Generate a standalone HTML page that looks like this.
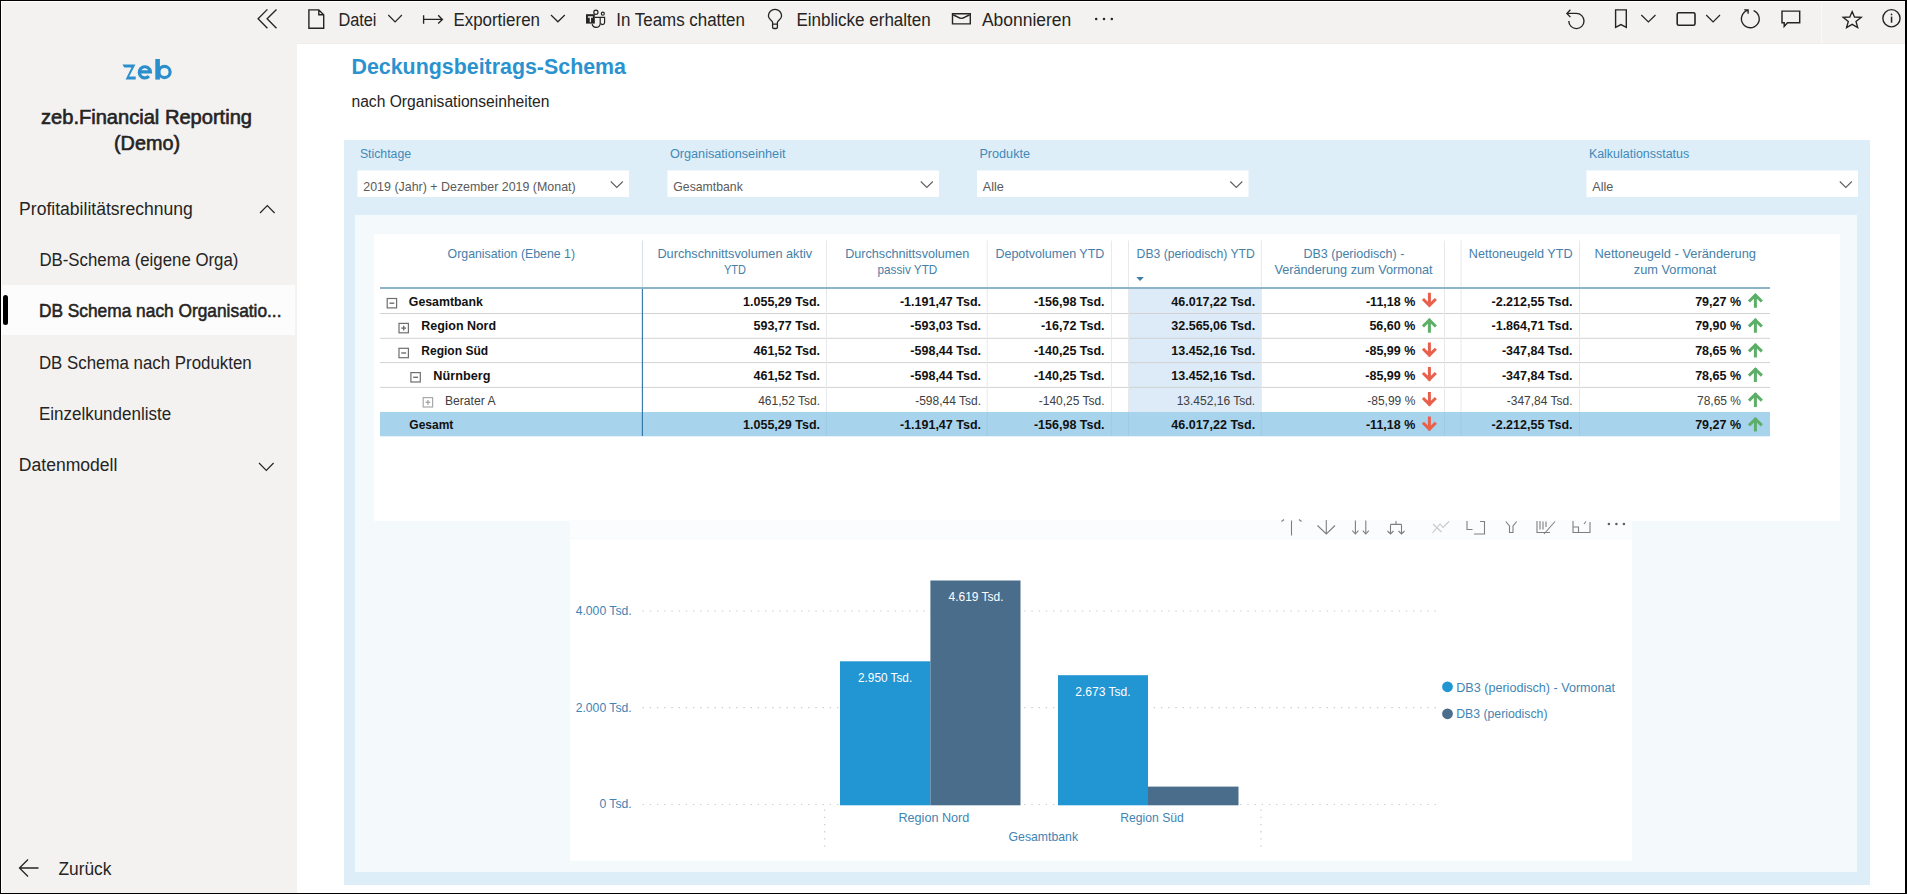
<!DOCTYPE html>
<html><head><meta charset="utf-8"><title>Deckungsbeitrags-Schema</title>
<style>html,body{margin:0;padding:0;background:#fff;overflow:hidden}svg{display:block}text{font-family:"Liberation Sans",sans-serif}</style>
</head><body>
<svg width="1907" height="894" viewBox="0 0 1907 894">
<rect x="0" y="0" width="1907" height="894" fill="#ffffff" />
<rect x="2" y="2" width="295" height="891" fill="#f3f2f1" />
<rect x="2" y="2" width="1903" height="42" fill="#f3f2f1" />
<line x1="297" y1="43.5" x2="1905" y2="43.5" stroke="#efeeec" stroke-width="1" />
<rect x="2" y="285" width="293" height="50" fill="#fcfcfc" />
<rect x="3" y="295" width="5" height="30" rx="2.5" fill="#000"/>
<path d="M267.4,9.4 L258.1,18.8 L267.4,28.3 M276.5,9.4 L267.1,18.8 L276.5,28.3" stroke="#252423" stroke-width="1.35" fill="none" />
<path d="M308.9,9.9 H318.8 L323.7,14.8 V28.2 H308.9 Z M318.8,9.9 V14.8 H323.7" stroke="#252423" stroke-width="1.4" fill="none" />
<text x="338.4" y="25.8" font-size="18" fill="#252423" textLength="38.1" lengthAdjust="spacingAndGlyphs" >Datei</text>
<path d="M388.3,15 L395.1,21.8 L401.9,15" stroke="#252423" stroke-width="1.2" fill="none" />
<path d="M423.6,15.2 V23.8 M424,19.4 H442.2 M438.2,15.2 L442.4,19.4 L438.2,23.6" stroke="#252423" stroke-width="1.35" fill="none" />
<text x="453.4" y="25.8" font-size="18" fill="#252423" textLength="86.6" lengthAdjust="spacingAndGlyphs" >Exportieren</text>
<path d="M551,15 L557.9,21.8 L564.8,15" stroke="#252423" stroke-width="1.2" fill="none" />
<g fill="none" stroke="#252423" stroke-width="1.2"><circle cx="595.9" cy="12.3" r="2.1"/><circle cx="602.8" cy="13.7" r="1.5"/><path d="M594.8,17.3 H600.2 V23.3 A4.1,4.1 0 0 1 592.1,24.2"/><path d="M600.4,17.3 H604.6 V22.4 A2.1,2.1 0 0 1 600.6,23.3"/></g>
<rect x="586" y="14.2" width="8.8" height="9.4" fill="#252423" />
<path d="M587.9,17 H592.9 M590.4,17 V22.2" stroke="#f3f2f1" stroke-width="1.3" fill="none" />
<text x="616.3" y="25.8" font-size="18" fill="#252423" textLength="128.5" lengthAdjust="spacingAndGlyphs" >In Teams chatten</text>
<path d="M772.6,24.1 V22.3 C772.6,20.6 768.4,19.2 768.4,15.9 A6.6,6.6 0 0 1 781.6,15.9 C781.6,19.2 777.4,20.6 777.4,22.3 V24.1 Z M772.6,24.1 V27.2 A1.3,1.3 0 0 0 773.9,28.5 H776.1 A1.3,1.3 0 0 0 777.4,27.2 V24.1" stroke="#252423" stroke-width="1.3" fill="none" />
<text x="796.4" y="25.8" font-size="18" fill="#252423" textLength="134.4" lengthAdjust="spacingAndGlyphs" >Einblicke erhalten</text>
<path d="M952.5,13.8 H970.3 V23.9 H952.5 Z" stroke="#252423" stroke-width="1.4" fill="none" />
<path d="M953.2,15 C957,16 958.5,18.4 961.4,18.4 C964.3,18.4 965.8,16 969.6,15" stroke="#252423" stroke-width="1.3" fill="none" />
<text x="981.9" y="25.8" font-size="18" fill="#252423" textLength="89.4" lengthAdjust="spacingAndGlyphs" >Abonnieren</text>
<circle cx="1096.2" cy="19" r="1.25" fill="#252423"/>
<circle cx="1104" cy="19" r="1.25" fill="#252423"/>
<circle cx="1111.8" cy="19" r="1.25" fill="#252423"/>
<path d="M1566.9,13.4 H1576.4 A7.6,7.6 0 1 1 1568.8,21 M1570.4,9.7 L1566.9,13.4 L1570.4,17.1" stroke="#252423" stroke-width="1.35" fill="none" />
<path d="M1615.6,9.9 H1626.3 V27.4 L1620.95,24.6 L1615.6,27.4 Z" stroke="#252423" stroke-width="1.4" fill="none" />
<path d="M1641.3,15 L1648.4,21.9 L1655.5,15" stroke="#252423" stroke-width="1.2" fill="none" />
<rect x="1677.2" y="12.7" width="17.8" height="12.6" rx="1.6" fill="none" stroke="#252423" stroke-width="1.6"/>
<path d="M1706.2,15 L1713.1,21.9 L1720,15" stroke="#252423" stroke-width="1.2" fill="none" />
<path d="M1753.6,10.6 A8.9,8.9 0 1 1 1747.6,10.4 M1744.2,9.8 H1748.1 V13.8" stroke="#252423" stroke-width="1.35" fill="none" />
<path d="M1782,11.1 H1799.7 V22.8 H1787.5 L1784.2,26.3 V22.8 H1782 Z" stroke="#252423" stroke-width="1.45" fill="none" />
<line x1="1821.5" y1="2" x2="1821.5" y2="43" stroke="#faf9f8" stroke-width="1" />
<path d="M1852.15,11.6 L1854.5,17 L1861.2,17.4 L1856,21.5 L1857.7,27.5 L1852.15,24.3 L1846.6,27.5 L1848.3,21.5 L1843.1,17.4 L1849.8,17 Z" stroke="#252423" stroke-width="1.35" fill="none" stroke-linejoin="miter"/>
<circle cx="1891.45" cy="18.25" r="8.6" fill="none" stroke="#252423" stroke-width="1.4"/>
<rect x="1890.8" y="16.6" width="1.5" height="6.1" fill="#252423" />
<circle cx="1891.55" cy="14.4" r="0.85" fill="#252423"/>
<g fill="#2a8fcc"><path d="M122.4,64.4 H135.4 L129.2,76.4 H135.7 V79.6 H125.6 L131.5,67.6 H124.3 Z"/></g>
<g fill="none" stroke="#2a8fcc" stroke-width="3.2"><path d="M139.4,71.9 H150.4 A5.6,5.6 0 1 0 148.9,76.2"/><circle cx="164.5" cy="72" r="5.6"/></g>
<rect x="155.3" y="59" width="4.6" height="20.6" fill="#2a8fcc" />
<text x="146.5" y="124.3" font-size="19.6" fill="#252423" text-anchor="middle" textLength="211" lengthAdjust="spacingAndGlyphs" stroke="#252423" stroke-width="0.6">zeb.Financial Reporting</text>
<text x="147" y="150.2" font-size="19.6" fill="#252423" text-anchor="middle" textLength="66" lengthAdjust="spacingAndGlyphs" stroke="#252423" stroke-width="0.6">(Demo)</text>
<text x="19.1" y="215.3" font-size="18" fill="#252423" textLength="173.7" lengthAdjust="spacingAndGlyphs" >Profitabilitätsrechnung</text>
<path d="M260,213 L267.3,205.5 L274.6,213" stroke="#252423" stroke-width="1.2" fill="none" />
<text x="39.4" y="266" font-size="18" fill="#252423" textLength="199" lengthAdjust="spacingAndGlyphs" >DB-Schema (eigene Orga)</text>
<text x="38.9" y="316.6" font-size="18.2" fill="#252423" textLength="242.6" lengthAdjust="spacingAndGlyphs" stroke="#252423" stroke-width="0.55">DB Schema nach Organisatio...</text>
<text x="38.9" y="368.9" font-size="18" fill="#252423" textLength="212.8" lengthAdjust="spacingAndGlyphs" >DB Schema nach Produkten</text>
<text x="38.9" y="419.6" font-size="18" fill="#252423" textLength="132.2" lengthAdjust="spacingAndGlyphs" >Einzelkundenliste</text>
<text x="18.8" y="470.6" font-size="18" fill="#252423" textLength="98.6" lengthAdjust="spacingAndGlyphs" >Datenmodell</text>
<path d="M259,463 L266.3,470.3 L273.6,463" stroke="#252423" stroke-width="1.2" fill="none" />
<path d="M38.5,868 H19.5 M28,859.5 L19.5,868 L28,876.5" stroke="#252423" stroke-width="1.3" fill="none" />
<text x="58.5" y="875" font-size="18" fill="#252423" textLength="52.9" lengthAdjust="spacingAndGlyphs" >Zurück</text>
<text x="351.5" y="73.5" font-size="21.5" fill="#2a93cf" font-weight="bold" textLength="274.5" lengthAdjust="spacingAndGlyphs" >Deckungsbeitrags-Schema</text>
<text x="351.5" y="106.7" font-size="15.8" fill="#252423" textLength="198" lengthAdjust="spacingAndGlyphs" >nach Organisationseinheiten</text>
<rect x="344" y="140" width="1526" height="745" fill="#deeef9" />
<rect x="355" y="215" width="1502" height="657" fill="#f4fafb" />
<text x="359.9" y="158" font-size="12.5" fill="#4189b8" textLength="51.2" lengthAdjust="spacingAndGlyphs" >Stichtage</text>
<rect x="357.5" y="170.5" width="271.5" height="26.5" fill="#ffffff" />
<text x="363.3" y="191" font-size="12.8" fill="#5a5a5a" textLength="212.4" lengthAdjust="spacingAndGlyphs" >2019 (Jahr) + Dezember 2019 (Monat)</text>
<path d="M610.8,181.5 L616.8,187.5 L622.8,181.5" stroke="#605e5c" stroke-width="1.1" fill="none" />
<text x="669.9" y="158" font-size="12.5" fill="#4189b8" textLength="115.6" lengthAdjust="spacingAndGlyphs" >Organisationseinheit</text>
<rect x="667.5" y="170.5" width="271.5" height="26.5" fill="#ffffff" />
<text x="673.3" y="191" font-size="12.8" fill="#5a5a5a" textLength="69.5" lengthAdjust="spacingAndGlyphs" >Gesamtbank</text>
<path d="M920.8,181.5 L926.8,187.5 L932.8,181.5" stroke="#605e5c" stroke-width="1.1" fill="none" />
<text x="979.4" y="158" font-size="12.5" fill="#4189b8" textLength="50.6" lengthAdjust="spacingAndGlyphs" >Produkte</text>
<rect x="977" y="170.5" width="271.5" height="26.5" fill="#ffffff" />
<text x="982.8" y="191" font-size="12.8" fill="#5a5a5a" textLength="21" lengthAdjust="spacingAndGlyphs" >Alle</text>
<path d="M1230.3,181.5 L1236.3,187.5 L1242.3,181.5" stroke="#605e5c" stroke-width="1.1" fill="none" />
<text x="1588.9" y="158" font-size="12.5" fill="#4189b8" textLength="100.3" lengthAdjust="spacingAndGlyphs" >Kalkulationsstatus</text>
<rect x="1586.5" y="170.5" width="271.5" height="26.5" fill="#ffffff" />
<text x="1592.3" y="191" font-size="12.8" fill="#5a5a5a" textLength="21" lengthAdjust="spacingAndGlyphs" >Alle</text>
<path d="M1839.8,181.5 L1845.8,187.5 L1851.8,181.5" stroke="#605e5c" stroke-width="1.1" fill="none" />
<rect x="374" y="234" width="1466" height="287" fill="#ffffff" />
<rect x="570" y="539" width="1062" height="322" fill="#ffffff" />
<rect x="1128.5" y="289" width="132.8" height="123" fill="#dcebf7" />
<rect x="380" y="412" width="1390" height="24.3" fill="#a7d3ed" />
<line x1="380" y1="313.5" x2="1770" y2="313.5" stroke="#d2d2d2" stroke-width="1" />
<line x1="380" y1="338.3" x2="1770" y2="338.3" stroke="#d2d2d2" stroke-width="1" />
<line x1="380" y1="362.6" x2="1770" y2="362.6" stroke="#d2d2d2" stroke-width="1" />
<line x1="380" y1="387.4" x2="1770" y2="387.4" stroke="#d2d2d2" stroke-width="1" />
<line x1="642.4" y1="240.5" x2="642.4" y2="288" stroke="#d6dee4" stroke-width="1" />
<line x1="642.4" y1="288" x2="642.4" y2="436" stroke="#2e73a6" stroke-width="1.1" />
<line x1="826.5" y1="240.5" x2="826.5" y2="412" stroke="#e6e8ea" stroke-width="1" />
<line x1="826.5" y1="412" x2="826.5" y2="436" stroke="#9ecbe6" stroke-width="1" />
<line x1="987.2" y1="240.5" x2="987.2" y2="412" stroke="#e6e8ea" stroke-width="1" />
<line x1="987.2" y1="412" x2="987.2" y2="436" stroke="#9ecbe6" stroke-width="1" />
<line x1="1111.4" y1="240.5" x2="1111.4" y2="412" stroke="#e6e8ea" stroke-width="1" />
<line x1="1111.4" y1="412" x2="1111.4" y2="436" stroke="#9ecbe6" stroke-width="1" />
<line x1="1128.5" y1="240.5" x2="1128.5" y2="412" stroke="#e6e8ea" stroke-width="1" />
<line x1="1128.5" y1="412" x2="1128.5" y2="436" stroke="#9ecbe6" stroke-width="1" />
<line x1="1261.3" y1="240.5" x2="1261.3" y2="412" stroke="#e6e8ea" stroke-width="1" />
<line x1="1261.3" y1="412" x2="1261.3" y2="436" stroke="#9ecbe6" stroke-width="1" />
<line x1="1444.5" y1="240.5" x2="1444.5" y2="412" stroke="#e6e8ea" stroke-width="1" />
<line x1="1444.5" y1="412" x2="1444.5" y2="436" stroke="#9ecbe6" stroke-width="1" />
<line x1="1461" y1="240.5" x2="1461" y2="412" stroke="#e6e8ea" stroke-width="1" />
<line x1="1461" y1="412" x2="1461" y2="436" stroke="#9ecbe6" stroke-width="1" />
<line x1="1579.5" y1="240.5" x2="1579.5" y2="412" stroke="#e6e8ea" stroke-width="1" />
<line x1="1579.5" y1="412" x2="1579.5" y2="436" stroke="#9ecbe6" stroke-width="1" />
<line x1="380" y1="288" x2="1770" y2="288" stroke="#8db3c9" stroke-width="2" />
<text x="511.3" y="258" font-size="12.6" fill="#4680a8" text-anchor="middle" textLength="127.4" lengthAdjust="spacingAndGlyphs" >Organisation (Ebene 1)</text>
<text x="734.8" y="258" font-size="12.6" fill="#4680a8" text-anchor="middle" textLength="154.8" lengthAdjust="spacingAndGlyphs" >Durchschnittsvolumen aktiv</text>
<text x="735" y="274" font-size="12.6" fill="#4680a8" text-anchor="middle" textLength="22" lengthAdjust="spacingAndGlyphs" >YTD</text>
<text x="907.3" y="258" font-size="12.6" fill="#4680a8" text-anchor="middle" textLength="124.2" lengthAdjust="spacingAndGlyphs" >Durchschnittsvolumen</text>
<text x="907.4" y="274" font-size="12.6" fill="#4680a8" text-anchor="middle" textLength="59.8" lengthAdjust="spacingAndGlyphs" >passiv YTD</text>
<text x="1049.9" y="258" font-size="12.6" fill="#4680a8" text-anchor="middle" textLength="109" lengthAdjust="spacingAndGlyphs" >Depotvolumen YTD</text>
<text x="1195.7" y="258" font-size="12.6" fill="#4680a8" text-anchor="middle" textLength="118.2" lengthAdjust="spacingAndGlyphs" >DB3 (periodisch) YTD</text>
<text x="1353.9" y="258" font-size="12.6" fill="#4680a8" text-anchor="middle" textLength="100.9" lengthAdjust="spacingAndGlyphs" >DB3 (periodisch) -</text>
<text x="1353.5" y="274" font-size="12.6" fill="#4680a8" text-anchor="middle" textLength="158.1" lengthAdjust="spacingAndGlyphs" >Veränderung zum Vormonat</text>
<text x="1520.7" y="258" font-size="12.6" fill="#4680a8" text-anchor="middle" textLength="103.8" lengthAdjust="spacingAndGlyphs" >Nettoneugeld YTD</text>
<text x="1675.25" y="258" font-size="12.6" fill="#4680a8" text-anchor="middle" textLength="161.5" lengthAdjust="spacingAndGlyphs" >Nettoneugeld - Veränderung</text>
<text x="1675" y="274" font-size="12.6" fill="#4680a8" text-anchor="middle" textLength="82.5" lengthAdjust="spacingAndGlyphs" >zum Vormonat</text>
<path d="M1136.3,277 H1143.9 L1140.1,280.9 Z" stroke="none" stroke-width="1" fill="#3f7ea8" />
<rect x="387.20000000000005" y="298.5" width="9.4" height="9.4" fill="none" stroke="#6e6e6e" stroke-width="1.2"/>
<line x1="389.5" y1="303.2" x2="394.3" y2="303.2" stroke="#6e6e6e" stroke-width="1.4" />
<text x="408.8" y="305.5" font-size="12.5" fill="#111111" font-weight="bold" textLength="74" lengthAdjust="spacingAndGlyphs" >Gesamtbank</text>
<text x="820" y="305.5" font-size="12.5" fill="#111111" font-weight="bold" text-anchor="end" >1.055,29 Tsd.</text>
<text x="981" y="305.5" font-size="12.5" fill="#111111" font-weight="bold" text-anchor="end" >-1.191,47 Tsd.</text>
<text x="1104.6" y="305.5" font-size="12.5" fill="#111111" font-weight="bold" text-anchor="end" >-156,98 Tsd.</text>
<text x="1255.2" y="305.5" font-size="12.5" fill="#111111" font-weight="bold" text-anchor="end" >46.017,22 Tsd.</text>
<text x="1415.3" y="305.5" font-size="12.5" fill="#111111" font-weight="bold" text-anchor="end" >-11,18 %</text>
<text x="1572.6" y="305.5" font-size="12.5" fill="#111111" font-weight="bold" text-anchor="end" >-2.212,55 Tsd.</text>
<text x="1741" y="305.5" font-size="12.5" fill="#111111" font-weight="bold" text-anchor="end" >79,27 %</text>
<path d="M1429.4,294.3 V305.1 M1424.0,300.0 L1429.4,305.3 L1434.8000000000002,300.0" stroke="#e8604c" stroke-width="3" fill="none" stroke-linecap="square"/>
<path d="M1755.4,306.3 V295.4 M1750.0,300.5 L1755.4,295.2 L1760.8000000000002,300.5" stroke="#5cae68" stroke-width="3" fill="none" stroke-linecap="square"/>
<rect x="399.0" y="323.4" width="9.4" height="9.4" fill="none" stroke="#6e6e6e" stroke-width="1.2"/>
<line x1="401.29999999999995" y1="328.09999999999997" x2="406.09999999999997" y2="328.09999999999997" stroke="#6e6e6e" stroke-width="1.4" />
<line x1="403.7" y1="325.69999999999993" x2="403.7" y2="330.49999999999994" stroke="#6e6e6e" stroke-width="1.4" />
<text x="421.3" y="330.4" font-size="12.5" fill="#111111" font-weight="bold" textLength="74.8" lengthAdjust="spacingAndGlyphs" >Region Nord</text>
<text x="820" y="330.4" font-size="12.5" fill="#111111" font-weight="bold" text-anchor="end" >593,77 Tsd.</text>
<text x="981" y="330.4" font-size="12.5" fill="#111111" font-weight="bold" text-anchor="end" >-593,03 Tsd.</text>
<text x="1104.6" y="330.4" font-size="12.5" fill="#111111" font-weight="bold" text-anchor="end" >-16,72 Tsd.</text>
<text x="1255.2" y="330.4" font-size="12.5" fill="#111111" font-weight="bold" text-anchor="end" >32.565,06 Tsd.</text>
<text x="1415.3" y="330.4" font-size="12.5" fill="#111111" font-weight="bold" text-anchor="end" >56,60 %</text>
<text x="1572.6" y="330.4" font-size="12.5" fill="#111111" font-weight="bold" text-anchor="end" >-1.864,71 Tsd.</text>
<text x="1741" y="330.4" font-size="12.5" fill="#111111" font-weight="bold" text-anchor="end" >79,90 %</text>
<path d="M1429.4,331.2 V320.29999999999995 M1424.0,325.4 L1429.4,320.09999999999997 L1434.8000000000002,325.4" stroke="#5cae68" stroke-width="3" fill="none" stroke-linecap="square"/>
<path d="M1755.4,331.2 V320.29999999999995 M1750.0,325.4 L1755.4,320.09999999999997 L1760.8000000000002,325.4" stroke="#5cae68" stroke-width="3" fill="none" stroke-linecap="square"/>
<rect x="399.0" y="348.3" width="9.4" height="9.4" fill="none" stroke="#6e6e6e" stroke-width="1.2"/>
<line x1="401.29999999999995" y1="353.0" x2="406.09999999999997" y2="353.0" stroke="#6e6e6e" stroke-width="1.4" />
<text x="421.3" y="355.3" font-size="12.5" fill="#111111" font-weight="bold" textLength="66.8" lengthAdjust="spacingAndGlyphs" >Region Süd</text>
<text x="820" y="355.3" font-size="12.5" fill="#111111" font-weight="bold" text-anchor="end" >461,52 Tsd.</text>
<text x="981" y="355.3" font-size="12.5" fill="#111111" font-weight="bold" text-anchor="end" >-598,44 Tsd.</text>
<text x="1104.6" y="355.3" font-size="12.5" fill="#111111" font-weight="bold" text-anchor="end" >-140,25 Tsd.</text>
<text x="1255.2" y="355.3" font-size="12.5" fill="#111111" font-weight="bold" text-anchor="end" >13.452,16 Tsd.</text>
<text x="1415.3" y="355.3" font-size="12.5" fill="#111111" font-weight="bold" text-anchor="end" >-85,99 %</text>
<text x="1572.6" y="355.3" font-size="12.5" fill="#111111" font-weight="bold" text-anchor="end" >-347,84 Tsd.</text>
<text x="1741" y="355.3" font-size="12.5" fill="#111111" font-weight="bold" text-anchor="end" >78,65 %</text>
<path d="M1429.4,344.1 V354.90000000000003 M1424.0,349.8 L1429.4,355.1 L1434.8000000000002,349.8" stroke="#e8604c" stroke-width="3" fill="none" stroke-linecap="square"/>
<path d="M1755.4,356.1 V345.2 M1750.0,350.3 L1755.4,345.0 L1760.8000000000002,350.3" stroke="#5cae68" stroke-width="3" fill="none" stroke-linecap="square"/>
<rect x="410.90000000000003" y="372.6" width="9.4" height="9.4" fill="none" stroke="#6e6e6e" stroke-width="1.2"/>
<line x1="413.2" y1="377.3" x2="418.0" y2="377.3" stroke="#6e6e6e" stroke-width="1.4" />
<text x="433.3" y="379.6" font-size="12.5" fill="#111111" font-weight="bold" textLength="57.1" lengthAdjust="spacingAndGlyphs" >Nürnberg</text>
<text x="820" y="379.6" font-size="12.5" fill="#111111" font-weight="bold" text-anchor="end" >461,52 Tsd.</text>
<text x="981" y="379.6" font-size="12.5" fill="#111111" font-weight="bold" text-anchor="end" >-598,44 Tsd.</text>
<text x="1104.6" y="379.6" font-size="12.5" fill="#111111" font-weight="bold" text-anchor="end" >-140,25 Tsd.</text>
<text x="1255.2" y="379.6" font-size="12.5" fill="#111111" font-weight="bold" text-anchor="end" >13.452,16 Tsd.</text>
<text x="1415.3" y="379.6" font-size="12.5" fill="#111111" font-weight="bold" text-anchor="end" >-85,99 %</text>
<text x="1572.6" y="379.6" font-size="12.5" fill="#111111" font-weight="bold" text-anchor="end" >-347,84 Tsd.</text>
<text x="1741" y="379.6" font-size="12.5" fill="#111111" font-weight="bold" text-anchor="end" >78,65 %</text>
<path d="M1429.4,368.40000000000003 V379.20000000000005 M1424.0,374.1 L1429.4,379.40000000000003 L1434.8000000000002,374.1" stroke="#e8604c" stroke-width="3" fill="none" stroke-linecap="square"/>
<path d="M1755.4,380.40000000000003 V369.5 M1750.0,374.6 L1755.4,369.3 L1760.8000000000002,374.6" stroke="#5cae68" stroke-width="3" fill="none" stroke-linecap="square"/>
<rect x="423.20000000000005" y="397.6" width="9.4" height="9.4" fill="none" stroke="#a8a8a8" stroke-width="1.2"/>
<line x1="425.5" y1="402.3" x2="430.3" y2="402.3" stroke="#a8a8a8" stroke-width="1.4" />
<line x1="427.90000000000003" y1="399.9" x2="427.90000000000003" y2="404.7" stroke="#a8a8a8" stroke-width="1.4" />
<text x="444.9" y="404.6" font-size="12" fill="#404040" textLength="50.6" lengthAdjust="spacingAndGlyphs" >Berater A</text>
<text x="820" y="404.6" font-size="12" fill="#404040" text-anchor="end" >461,52 Tsd.</text>
<text x="981" y="404.6" font-size="12" fill="#404040" text-anchor="end" >-598,44 Tsd.</text>
<text x="1104.6" y="404.6" font-size="12" fill="#404040" text-anchor="end" >-140,25 Tsd.</text>
<text x="1255.2" y="404.6" font-size="12" fill="#404040" text-anchor="end" >13.452,16 Tsd.</text>
<text x="1415.3" y="404.6" font-size="12" fill="#404040" text-anchor="end" >-85,99 %</text>
<text x="1572.6" y="404.6" font-size="12" fill="#404040" text-anchor="end" >-347,84 Tsd.</text>
<text x="1741" y="404.6" font-size="12" fill="#404040" text-anchor="end" >78,65 %</text>
<path d="M1429.4,393.40000000000003 V404.20000000000005 M1424.0,399.1 L1429.4,404.40000000000003 L1434.8000000000002,399.1" stroke="#e8604c" stroke-width="3" fill="none" stroke-linecap="square"/>
<path d="M1755.4,405.40000000000003 V394.5 M1750.0,399.6 L1755.4,394.3 L1760.8000000000002,399.6" stroke="#5cae68" stroke-width="3" fill="none" stroke-linecap="square"/>
<text x="409.3" y="429.3" font-size="12.5" fill="#111111" font-weight="bold" textLength="44" lengthAdjust="spacingAndGlyphs" >Gesamt</text>
<text x="820" y="429.3" font-size="12.5" fill="#111111" font-weight="bold" text-anchor="end" >1.055,29 Tsd.</text>
<text x="981" y="429.3" font-size="12.5" fill="#111111" font-weight="bold" text-anchor="end" >-1.191,47 Tsd.</text>
<text x="1104.6" y="429.3" font-size="12.5" fill="#111111" font-weight="bold" text-anchor="end" >-156,98 Tsd.</text>
<text x="1255.2" y="429.3" font-size="12.5" fill="#111111" font-weight="bold" text-anchor="end" >46.017,22 Tsd.</text>
<text x="1415.3" y="429.3" font-size="12.5" fill="#111111" font-weight="bold" text-anchor="end" >-11,18 %</text>
<text x="1572.6" y="429.3" font-size="12.5" fill="#111111" font-weight="bold" text-anchor="end" >-2.212,55 Tsd.</text>
<text x="1741" y="429.3" font-size="12.5" fill="#111111" font-weight="bold" text-anchor="end" >79,27 %</text>
<path d="M1429.4,418.1 V428.90000000000003 M1424.0,423.8 L1429.4,429.1 L1434.8000000000002,423.8" stroke="#e8604c" stroke-width="3" fill="none" stroke-linecap="square"/>
<path d="M1755.4,430.1 V419.2 M1750.0,424.3 L1755.4,419.0 L1760.8000000000002,424.3" stroke="#5cae68" stroke-width="3" fill="none" stroke-linecap="square"/>
<rect x="570" y="520" width="1062" height="18" fill="#fafcfd" />
<g fill="none" stroke="#7f7f7f" stroke-width="1.1"><path d="M1291.5,520.5 V535.5 M1281.5,521.5 L1284,519.5 M1301.5,521.5 L1299,519.5"/><path d="M1326.3,520 V534 M1317.5,525.5 L1326.3,534 L1335,525.5"/><path d="M1355.4,520.5 V534 M1352.4,530.6 L1355.4,534 L1358.4,530.6 M1365.8,520.5 V534 M1362.8,530.6 L1365.8,534 L1368.8,530.6"/><path d="M1396,521 V524.4 M1390.5,524.4 H1401.5 M1390.5,524.4 V534 M1401.5,524.4 V534 M1387.5,531 L1390.5,534 L1393.5,531 M1398.5,531 L1401.5,534 L1404.5,531"/><path d="M1467,521 V529.5 H1472.5 M1474,534 H1484.5 V521.5 H1480"/><path d="M1505.8,521.5 L1509.5,526 V532.5 H1513 V526 L1516.6,521.5"/><path d="M1537,521 V532.5 H1550 M1540,521 V529.5 M1543,521.5 V529.5 M1546,521.5 V527 M1544,534 L1555,521.5"/><path d="M1573,521 V532.5 H1590 V522 M1573,527 H1578.5 V532.5 M1584,524 L1586,521.5"/></g>
<path d="M1432.5,533 L1440,524 L1443,527.5 L1449,521.5 M1433,524 L1441.5,532" stroke="#c8c8c8" stroke-width="1.1" fill="none" />
<circle cx="1608.9" cy="524" r="1.3" fill="#606060"/>
<circle cx="1616.4" cy="524" r="1.3" fill="#606060"/>
<circle cx="1623.9" cy="524" r="1.3" fill="#606060"/>
<line x1="642.6" y1="611" x2="1440" y2="611" stroke="#c9c9c9" stroke-width="1.2" stroke-dasharray="1.3 5.9"/>
<text x="631.7" y="614.8" font-size="12.2" fill="#3f84b3" text-anchor="end" >4.000 Tsd.</text>
<line x1="642.6" y1="707.7" x2="1440" y2="707.7" stroke="#c9c9c9" stroke-width="1.2" stroke-dasharray="1.3 5.9"/>
<text x="631.7" y="711.5" font-size="12.2" fill="#3f84b3" text-anchor="end" >2.000 Tsd.</text>
<line x1="642.6" y1="804.5" x2="1440" y2="804.5" stroke="#c9c9c9" stroke-width="1.2" stroke-dasharray="1.3 5.9"/>
<text x="631.7" y="808.3" font-size="12.2" fill="#3f84b3" text-anchor="end" >0 Tsd.</text>
<rect x="840" y="661.3" width="90.4" height="144" fill="#2196d3" />
<rect x="930.4" y="580.5" width="90.1" height="224.8" fill="#4a6d8c" />
<rect x="1058" y="675.2" width="90" height="130.1" fill="#2196d3" />
<rect x="1148" y="786.6" width="90.5" height="18.7" fill="#4a6d8c" />
<text x="885.1" y="681.7" font-size="12.6" fill="#ffffff" text-anchor="middle" textLength="54.2" lengthAdjust="spacingAndGlyphs" >2.950 Tsd.</text>
<text x="976" y="600.8" font-size="12.6" fill="#ffffff" text-anchor="middle" textLength="55" lengthAdjust="spacingAndGlyphs" >4.619 Tsd.</text>
<text x="1102.9" y="696" font-size="12.6" fill="#ffffff" text-anchor="middle" textLength="55.4" lengthAdjust="spacingAndGlyphs" >2.673 Tsd.</text>
<text x="933.9" y="821.9" font-size="12.6" fill="#3f84b3" text-anchor="middle" textLength="70.9" lengthAdjust="spacingAndGlyphs" >Region Nord</text>
<text x="1152" y="821.9" font-size="12.6" fill="#3f84b3" text-anchor="middle" textLength="63.6" lengthAdjust="spacingAndGlyphs" >Region Süd</text>
<text x="1043.3" y="840.8" font-size="12.6" fill="#3f84b3" text-anchor="middle" textLength="69.5" lengthAdjust="spacingAndGlyphs" >Gesamtbank</text>
<line x1="824.7" y1="809.5" x2="824.7" y2="847" stroke="#c9c9c9" stroke-width="1.2" stroke-dasharray="1.3 5.9"/>
<line x1="1261" y1="809.5" x2="1261" y2="847" stroke="#c9c9c9" stroke-width="1.2" stroke-dasharray="1.3 5.9"/>
<circle cx="1447.5" cy="686.8" r="5.4" fill="#2196d3"/>
<circle cx="1447.5" cy="713.8" r="5.4" fill="#4a6d8c"/>
<text x="1456.2" y="691.8" font-size="12.6" fill="#3f84b3" textLength="158.9" lengthAdjust="spacingAndGlyphs" >DB3 (periodisch) - Vormonat</text>
<text x="1456.2" y="718.2" font-size="12.6" fill="#3f84b3" textLength="91.3" lengthAdjust="spacingAndGlyphs" >DB3 (periodisch)</text>
<rect x="0" y="0" width="1907" height="1" fill="#000" />
<rect x="0" y="893" width="1907" height="1" fill="#000" />
<rect x="0" y="0" width="1" height="894" fill="#000" />
<rect x="1905" y="0" width="2" height="894" fill="#000" />
</svg>
</body></html>
